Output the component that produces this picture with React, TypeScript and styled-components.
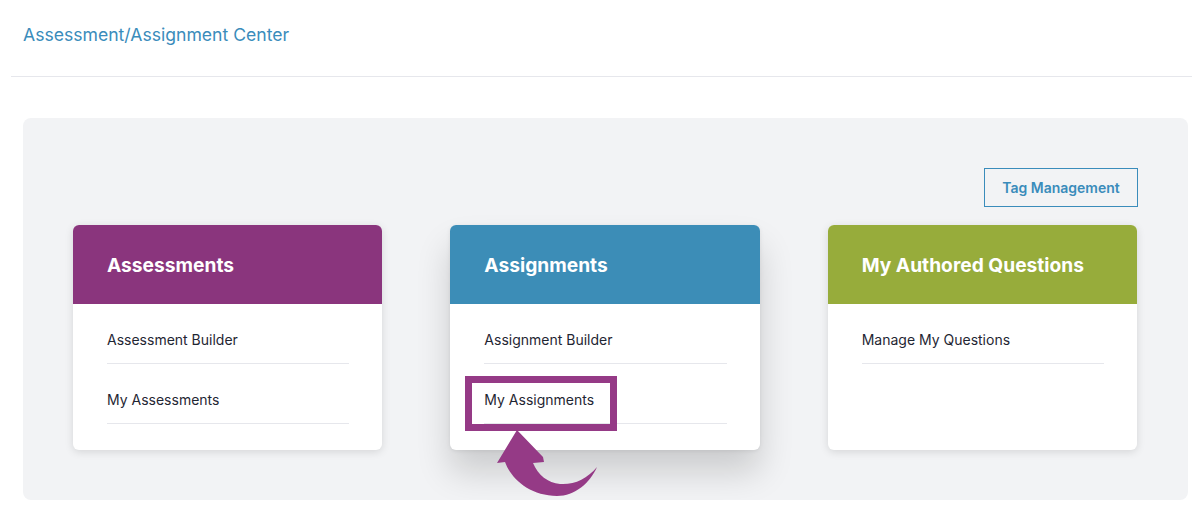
import styled, { createGlobalStyle } from "styled-components";

const GlobalStyle = createGlobalStyle`
  body {
    margin: 0;
    background: #ffffff;
    font-family: Inter, "Noto Sans", "Liberation Sans", sans-serif;
  }
`;

type Section = {
  title: string;
  color: string;
  links: string[];
  hovered?: boolean;
  marked?: string;
};

const sections: Section[] = [
  {
    title: "Assessments",
    color: "#8a357d",
    links: ["Assessment Builder", "My Assessments"],
  },
  {
    title: "Assignments",
    color: "#3c8db7",
    links: ["Assignment Builder", "My Assignments"],
    hovered: true,
    marked: "My Assignments",
  },
  {
    title: "My Authored Questions",
    color: "#97ac3b",
    links: ["Manage My Questions"],
  },
];

const CurvedArrow = () => (
  <ArrowSvg width="115" height="75" viewBox="0 0 115 75">
    <path
      d="M27,5 L7,38 L15,37 C21,54 40,71 67,71 C85,71 100,58 107,42 C97,54 84,60 70,59 C58,58 48,50 43,38 L54,37 L53,32 Z"
      fill="#953a86"
    />
  </ArrowSvg>
);

const App = () => {
  return (
    <>
      <GlobalStyle />
      <Page>
        <TopBar>
          <PageTitle>Assessment/Assignment Center</PageTitle>
        </TopBar>
        <Panel>
          <Toolbar>
            <OutlineButton>Tag Management</OutlineButton>
          </Toolbar>
          <CardGrid>
            {sections.map((s) => (
              <Card key={s.title} $hovered={s.hovered}>
                <CardHeader $color={s.color}>{s.title}</CardHeader>
                <CardBody>
                  {s.links.map((link) => (
                    <LinkItem key={link}>
                      {link}
                      {s.marked === link && (
                        <>
                          <HighlightBox />
                          <CurvedArrow />
                        </>
                      )}
                    </LinkItem>
                  ))}
                </CardBody>
              </Card>
            ))}
          </CardGrid>
        </Panel>
      </Page>
    </>
  );
};

const Page = styled.div`
  padding: 0 12px 0 11px;
  width: 1204px;
  box-sizing: border-box;
`;

const TopBar = styled.div`
  height: 77px;
  border-bottom: 1px solid #e6e7ec;
  padding-left: 12px;
  display: flex;
  align-items: center;
  padding-bottom: 8px;
  box-sizing: border-box;
`;

const PageTitle = styled.h1`
  margin: 0;
  font-size: 17.6px;
  font-weight: 400;
  color: #3a8cbb;
`;

const Panel = styled.div`
  margin: 41px 4px 0 12px;
  background: #f2f3f5;
  border-radius: 8px;
  padding: 50px 51px 50px 50px;
`;

const Toolbar = styled.div`
  display: flex;
  justify-content: flex-end;
  margin-bottom: 18px;
  margin-right: -1px;
`;

const OutlineButton = styled.button`
  width: 154px;
  height: 39px;
  border: 1px solid #3a8cbb;
  background: transparent;
  color: #3a8cbb;
  font-family: inherit;
  font-size: 14px;
  font-weight: 600;
  cursor: pointer;
`;

const CardGrid = styled.div`
  display: grid;
  grid-template-columns: repeat(3, 1fr);
  gap: 68px;
`;

const Card = styled.div<{ $hovered?: boolean }>`
  background: #ffffff;
  border-radius: 6px;
  box-shadow: ${(p) =>
    p.$hovered
      ? "0 22px 34px rgba(0, 0, 0, 0.16), 0 1px 4px rgba(0, 0, 0, 0.08)"
      : "0 2px 8px rgba(0, 0, 0, 0.12)"};
`;

const CardHeader = styled.div<{ $color: string }>`
  background: ${(p) => p.$color};
  color: #ffffff;
  height: 79px;
  border-radius: 6px 6px 0 0;
  padding: 0 34px;
  display: flex;
  align-items: center;
  font-size: 19.2px;
  font-weight: 700;
`;

const CardBody = styled.div`
  padding: 0 33px 26px 34px;
`;

const LinkItem = styled.div`
  position: relative;
  padding: 26px 0 13px;
  line-height: 20px;
  font-size: 14px;
  color: #1f2633;
  border-bottom: 1px solid #e6e7ec;
`;

const HighlightBox = styled.span`
  position: absolute;
  left: -19px;
  top: 12px;
  width: 152px;
  height: 55px;
  box-sizing: border-box;
  border: 7px solid #953a86;
`;

const ArrowSvg = styled.svg`
  position: absolute;
  left: 6px;
  top: 61px;
`;

export default App;
